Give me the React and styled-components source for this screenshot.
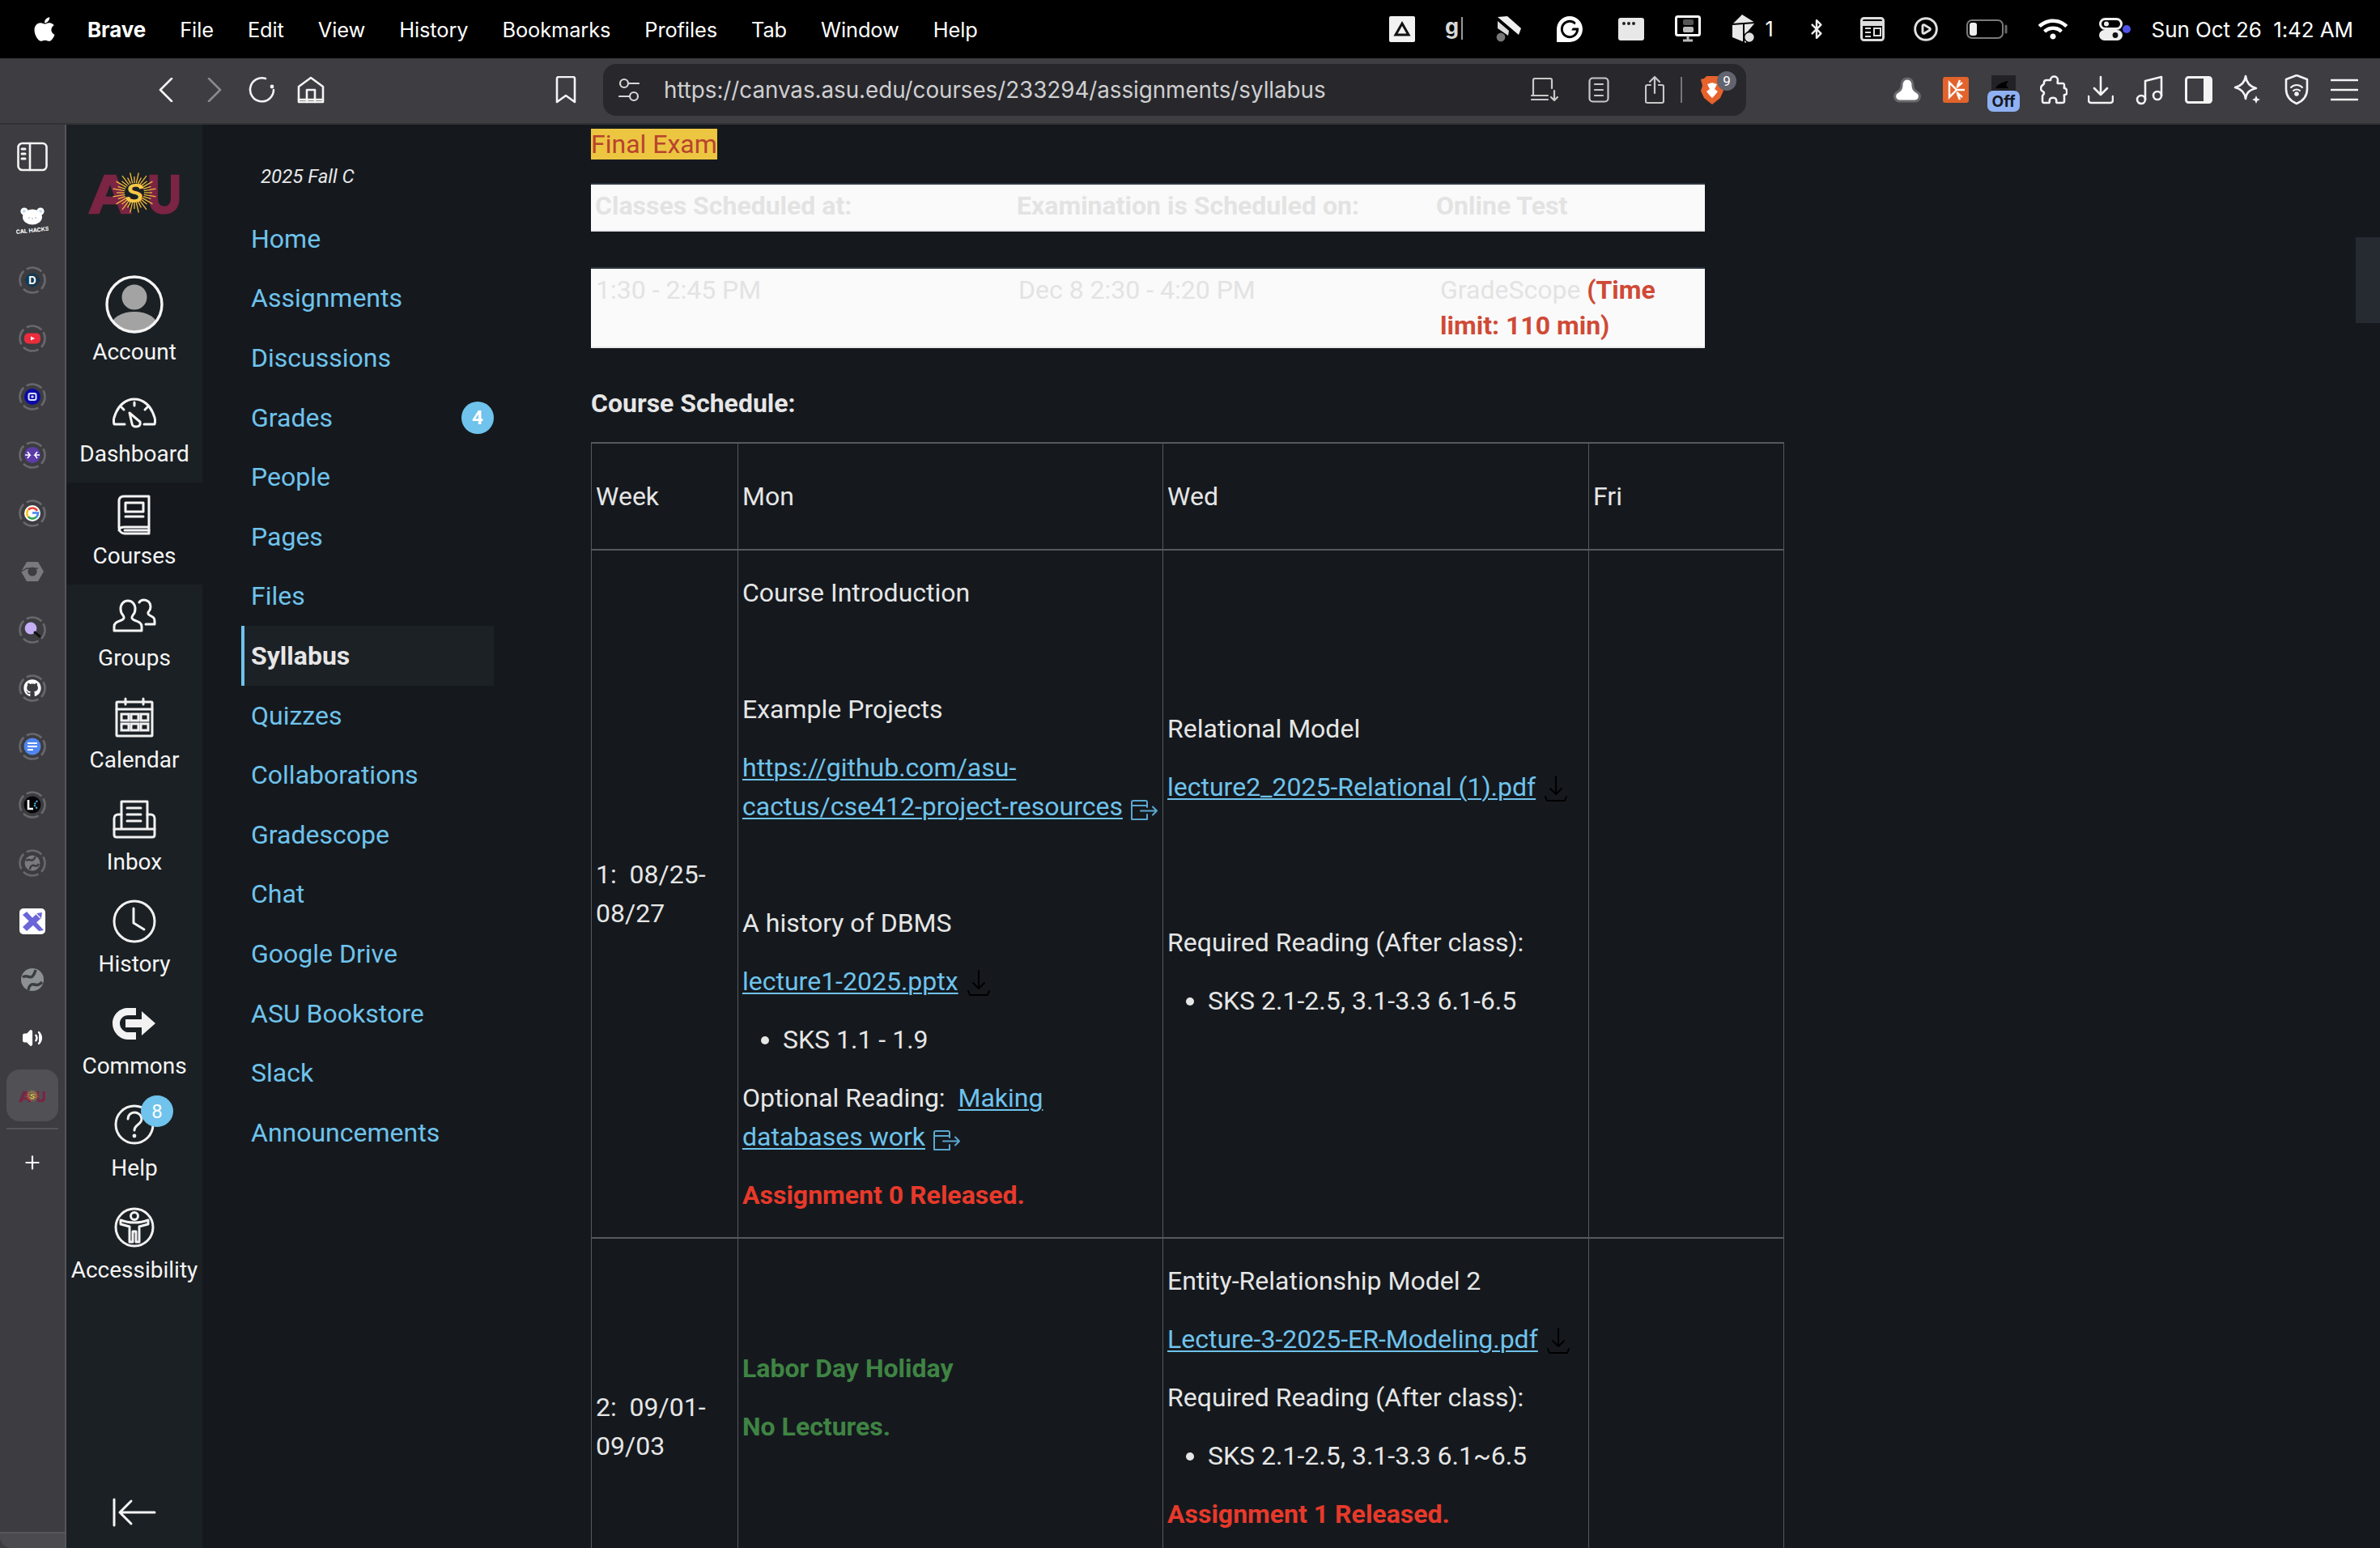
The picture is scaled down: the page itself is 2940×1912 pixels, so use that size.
import React from "react"
import styled, { createGlobalStyle } from "styled-components"
import { FaApple, FaGithub, FaWifi } from "react-icons/fa"
import { SiGrammarly } from "react-icons/si"
import { Bluetooth, CirclePlay, Plus, Volume2 } from "lucide-react"

const GlobalStyle = createGlobalStyle`
  html, body {
    margin: 0;
    padding: 0;
    background: #15191e;
    overflow: hidden;
  }
  * { box-sizing: border-box; }
`

const Screen = styled.div`
  width: 2940px;
  height: 1912px;
  display: flex;
  flex-direction: column;
  overflow: hidden;
  position: relative;
  font-family: Roboto, "Liberation Sans", sans-serif;
  color: #e6e6e6;
`

/* mac menu bar */
const MenuBar = styled.div`
  height: 72px;
  flex: none;
  background: #000;
  display: flex;
  align-items: center;
  padding: 0 33px 0 38px;
  font-family: Inter, "Liberation Sans", sans-serif;
  font-size: 25px;
  color: #fff;
`
const MenuItems = styled.div`
  display: flex;
  align-items: center;
  gap: 42px;
  margin-left: 36px;
`
const MenuItem = styled.span`
  font-weight: ${p => (p.$bold ? 700 : 400)};
  font-size: ${p => (p.$bold ? 26 : 25.4)}px;
  letter-spacing: -0.1px;
`
const StatusArea = styled.div`
  margin-left: auto;
  display: flex;
  align-items: center;
  height: 100%;
`
const StatusSlot = styled.span`
  display: flex;
  align-items: center;
  justify-content: center;
  width: ${p => p.$w}px;
  margin-left: ${p => p.$ml}px;
`
const ClockText = styled.span`
  margin-left: 25px;
  white-space: pre;
  font-size: 26px;
  letter-spacing: -0.1px;
`

/* browser toolbar */
const Toolbar = styled.div`
  height: 82px;
  flex: none;
  background: #3d3d42;
  border-bottom: 2px solid #323236;
  display: flex;
  align-items: center;
  padding-bottom: 2px;
`
const ToolSlot = styled.span`
  display: flex;
  align-items: center;
  justify-content: center;
  flex: none;
  width: ${p => p.$w}px;
  margin-left: ${p => p.$ml}px;
  position: relative;
`
const UrlBar = styled.div`
  margin-left: 33px;
  width: 1412px;
  height: 64px;
  flex: none;
  border-radius: 16px;
  background: #28282c;
  display: flex;
  align-items: center;
  padding-left: 19px;
`
const UrlText = styled.span`
  margin-left: 30px;
  font-family: Inter, "Liberation Sans", sans-serif;
  font-size: 27.8px;
  color: #cfcfd1;
  letter-spacing: -0.05px;
`
const UrlActions = styled.div`
  margin-left: auto;
  display: flex;
  align-items: center;
  padding-right: 27px;
`
const UrlDivider = styled.span`
  width: 2px;
  height: 32px;
  background: #77777b;
  margin-left: 20px;
`
const ShieldBadge = styled.span`
  position: absolute;
  top: -5px;
  right: -15px;
  width: 24px;
  height: 24px;
  border-radius: 50%;
  background: #62646f;
  color: #fff;
  font-size: 17px;
  display: flex;
  align-items: center;
  justify-content: center;
`
const OffTag = styled.span`
  position: absolute;
  left: 0;
  bottom: -9px;
  width: 40px;
  height: 26px;
  border-radius: 7px;
  background: #8fb0f3;
  color: #15181f;
  font-size: 19px;
  font-weight: 700;
  font-family: Inter, "Liberation Sans", sans-serif;
  display: flex;
  align-items: center;
  justify-content: center;
`

/* page body */
const Body = styled.div`
  flex: 1;
  display: flex;
  min-height: 0;
`
const TabStrip = styled.div`
  width: 82px;
  flex: none;
  background: #3c3c41;
  border-right: 2px solid #55555a;
  display: flex;
  flex-direction: column;
  align-items: center;
  padding-top: 18px;
  position: relative;
  &::after {
    content: "";
    position: absolute;
    left: 0;
    right: 0;
    bottom: 0;
    height: 18px;
    border-bottom-left-radius: 14px;
    border-top: 2px solid #55555a;
    background: #4a4a4f;
  }
`
const PanelToggle = styled.div`
  height: 44px;
  display: flex;
  align-items: center;
`
const BearTile = styled.div`
  margin-top: 38px;
  height: 40px;
  margin-bottom: 16px;
  display: flex;
  align-items: center;
`
const TabRow = styled.div`
  height: 72px;
  width: 100%;
  flex: none;
  display: flex;
  align-items: center;
  justify-content: center;
`
const ActiveTab = styled.div`
  width: 64px;
  height: 64px;
  margin-top: 3px;
  flex: none;
  border-radius: 16px;
  background: #505055;
  display: flex;
  align-items: center;
  justify-content: center;
`
const TabDivider = styled.div`
  width: 64px;
  height: 2px;
  flex: none;
  margin-top: 8px;
  background: #55555a;
`
const AddTab = styled.div`
  margin-top: 28px;
  display: flex;
`

const GlobalNav = styled.nav`
  width: 168px;
  flex: none;
  background: #1b2024;
  display: flex;
  flex-direction: column;
  align-items: stretch;
`
const LogoBlock = styled.div`
  height: 190px;
  flex: none;
  display: flex;
  justify-content: center;
  padding-top: 59px;
`
const GlobalItem = styled.div`
  height: 126px;
  flex: none;
  position: relative;
  display: flex;
  flex-direction: column;
  align-items: center;
  background: ${p => (p.$active ? "#15191e" : "transparent")};
`
const GlobalIcon = styled.div`
  height: 80px;
  flex: none;
  width: 100%;
  display: flex;
  align-items: center;
  justify-content: center;
  margin-top: ${p => p.$offset || 0}px;
`
const GlobalLabel = styled.span`
  position: absolute;
  top: 72px;
  line-height: 38px;
  font-size: 28px;
  color: #f5f5f5;
  white-space: nowrap;
`
const HelpBadge = styled.span`
  position: absolute;
  top: 1px;
  left: 92px;
  width: 40px;
  height: 39px;
  border-radius: 50%;
  background: #6fc3ec;
  color: #fff;
  font-size: 24px;
  display: flex;
  align-items: center;
  justify-content: center;
`
const CollapseRow = styled.div`
  margin-top: auto;
  height: 72px;
  flex: none;
  display: flex;
  justify-content: center;
  align-items: flex-start;
  padding-top: 10px;
`

const CourseNav = styled.nav`
  width: 480px;
  flex: none;
  padding: 46px 0 0 48px;
`
const TermLabel = styled.div`
  margin-left: 24px;
  height: 58px;
  line-height: 36px;
  font-size: 24px;
  font-style: italic;
  color: #e8e8e8;
`
const CourseLink = styled.div`
  width: 312px;
  height: 73.6px;
  display: flex;
  align-items: center;
  justify-content: space-between;
  padding-left: ${p => (p.$active ? 8 : 12)}px;
  font-size: 32px;
  font-weight: ${p => (p.$active ? 700 : 400)};
  color: ${p => (p.$active ? "#e6e6e6" : "#6fc3ec")};
  background: ${p => (p.$active ? "#1c2125" : "transparent")};
  border-left: ${p => (p.$active ? "4px solid #6fc3ec" : "none")};
`
const CountBadge = styled.span`
  width: 40px;
  height: 40px;
  border-radius: 50%;
  background: #6fc3ec;
  color: #fff;
  font-size: 24px;
  font-weight: 700;
  display: flex;
  align-items: center;
  justify-content: center;
`

/* syllabus */
const Main = styled.main`
  flex: 1;
  min-width: 0;
  height: 1758px;
  overflow: hidden;
  font-size: 32px;
  line-height: 48px;
  color: #e6e6e6;
`
const FinalExam = styled.div`
  height: 72px;
`
const Highlight = styled.span`
  background: #ecc641;
  color: #b8432f;
`
const ExamBox = styled.div`
  width: 1376px;
  margin-bottom: 44px;
  height: ${p => p.$h}px;
  background: #fafafa;
  border-top: 2px solid #2d3640;
  border-bottom: 2px solid #e9e9eb;
  display: grid;
  grid-template-columns: ${p => p.$cols};
  padding: ${p => p.$pad}px 0 0 ${p => p.$left}px;
  line-height: 44px;
  color: #e3e3e3;
  font-weight: ${p => (p.$bold ? 700 : 400)};
`
const TimeLimit = styled.strong`
  color: #cf4a36;
`
const SectionTitle = styled.div`
  font-weight: 700;
  margin-bottom: 24px;
`
const Schedule = styled.table`
  width: 1473px;
  border-collapse: collapse;
  table-layout: fixed;
  td {
    border: 2px solid #56595c;
    border-left-width: 1px;
    border-right-width: 1px;
    padding: 4px 5px;
    vertical-align: middle;
  }
  p {
    margin: 24px 0;
  }
  ul {
    margin: 24px 0;
    padding-left: 50px;
  }
`
const HeadRow = styled.tr`
  height: 132px;
`
const DocLink = styled.a`
  color: #6fc3ec;
  text-decoration: underline;
  text-decoration-thickness: 2px;
  text-underline-offset: 3px;
`
const Released = styled.strong`
  color: #e8392a;
`
const Holiday = styled.strong`
  color: #3f8443;
`
const ScrollThumb = styled.div`
  position: absolute;
  right: 0;
  top: 293px;
  width: 30px;
  height: 106px;
  background: #262a31;
`
const InlineIcon = styled.svg`
  margin-left: ${p => p.$ml || 10}px;
  vertical-align: -7px;
`

const stroke = { fill: "none", stroke: "currentColor", strokeLinecap: "round", strokeLinejoin: "round" }

const ExternalIcon = () => (
  <InlineIcon width="34" height="26" viewBox="0 0 34 26" style={{ color: "#5aa8cf" }}>
    <path {...stroke} strokeWidth="2" d="M20 9V3a2 2 0 0 0-2-2H3a2 2 0 0 0-2 2v21h19v-6M1 7h19M12 13.5h20M27 8.5l5 5-5 5" />
  </InlineIcon>
)

const DownloadIcon = () => (
  <InlineIcon width="30" height="32" viewBox="0 0 30 32" style={{ color: "#000" }}>
    <path {...stroke} strokeWidth="2" d="M15 1v22M8 16l7 7 7-7M2 26l2 5h22l2-5" />
  </InlineIcon>
)

/* drawn logo, the letters stay real text */
const logoLetter = { fontFamily: "Liberation Sans", fontWeight: 700, stroke: "#7b2444", strokeWidth: 2.4, fill: "#7b2444" }

const AsuLogo = ({ width = 117, height = 51 }) => (
  <svg width={width} height={height} viewBox="0 0 117 51" overflow="visible">
    <text {...logoLetter} x="1" y="50" fontSize="66" textLength="54" lengthAdjust="spacingAndGlyphs">A</text>
    <text {...logoLetter} x="74" y="50" fontSize="66" textLength="42" lengthAdjust="spacingAndGlyphs">U</text>
    <g stroke="#f2b93b" strokeWidth="1.3">
      {Array.from({ length: 32 }).map((_, i) => {
        const a = (i / 32) * Math.PI * 2
        const len = i % 2 ? 27 : 22
        return <line key={i} x1={58 + Math.cos(a) * 12} y1={25 + Math.sin(a) * 12} x2={58 + Math.cos(a) * len} y2={25 + Math.sin(a) * (len - 2)} />
      })}
    </g>
    <text x="58" y="37" textAnchor="middle" fontFamily="Liberation Sans" fontWeight="700" fontStyle="italic" fontSize="34" fill="#f7c748">S</text>
  </svg>
)

const Ring = ({ children }) => (
  <svg width="34" height="34" viewBox="0 0 34 34">
    <circle cx="17" cy="17" r="15.5" fill="none" stroke="#68686c" strokeWidth="2.6" strokeDasharray="20 4.4" transform="rotate(-30 17 17)" />
    {children}
  </svg>
)

const tabIcons = [
  <Ring key="d">
    <path d="M7 17l10-9 10 9-10 9z" fill="#143a52" /><circle cx="17" cy="17" r="8.5" fill="#143a52" />
    <text x="17" y="21.5" textAnchor="middle" fontSize="13" fontWeight="700" fontFamily="Inter" fill="#fff">D</text>
  </Ring>,
  <Ring key="yt">
    <rect x="7" y="10.5" width="20" height="13" rx="5" fill="#ec2c3c" /><path d="M15 14.5l5 2.5-5 2.5z" fill="#fff" />
  </Ring>,
  <Ring key="box">
    <circle cx="17" cy="17" r="10" fill="#0a0aa8" /><rect x="12.5" y="13" width="9" height="8" rx="2" fill="none" stroke="#dfe3ff" strokeWidth="2" /><rect x="15.5" y="15.6" width="3" height="2.8" fill="#dfe3ff" />
  </Ring>,
  <Ring key="purple">
    <circle cx="17" cy="17" r="10" fill="#5b3ca8" /><path d="M8 17h6l-3-4M14 17l-3 4M26 17h-6l3-4M20 17l3 4" stroke="#fff" strokeWidth="1.6" fill="none" />
  </Ring>,
  <Ring key="g">
    <circle cx="17" cy="17" r="10" fill="#fff" />
    <path d="M23 14a7 7 0 0 0-11-1.5" fill="none" stroke="#ea4335" strokeWidth="2.6" />
    <path d="M12 12.5a7 7 0 0 0 0 9" fill="none" stroke="#fbbc05" strokeWidth="2.6" />
    <path d="M12 21.5a7 7 0 0 0 10 0" fill="none" stroke="#34a853" strokeWidth="2.6" />
    <path d="M22 21.5c1.4-1.4 2-3 2-5h-7" fill="none" stroke="#4285f4" strokeWidth="2.6" />
  </Ring>,
  <svg key="hex" width="30" height="26" viewBox="0 0 30 26"><path d="M8 1h14l7 12-7 12H8L1 13z" fill="#7a7a7e" /><circle cx="15" cy="13" r="5.6" fill="#3c3c41" /><path d="M1 13l7-4h14" stroke="#3c3c41" strokeWidth="1.4" fill="none" /></svg>,
  <Ring key="lens">
    <circle cx="15" cy="15" r="7.4" fill="#c4aef5" /><path d="M20 20l6 5" stroke="#111" strokeWidth="3" strokeLinecap="round" />
  </Ring>,
  <Ring key="gh">
    <foreignObject x="6" y="6" width="22" height="22"><FaGithub size={22} color="#fff" /></foreignObject>
  </Ring>,
  <Ring key="docs">
    <circle cx="17" cy="17" r="10.5" fill="#4f86f0" /><path d="M11 13h12M11 17h12M11 21h7" stroke="#fff" strokeWidth="2" />
  </Ring>,
  <Ring key="lk">
    <circle cx="17" cy="17" r="10.5" fill="#060606" /><path d="M12 11v11h6" stroke="#fff" strokeWidth="2.6" fill="none" /><path d="M23 12l-4 5 4 5" stroke="#58c6f0" strokeWidth="2" fill="none" strokeDasharray="2 1.4" />
  </Ring>,
  <Ring key="globe1">
    <circle cx="17" cy="17" r="9.5" fill="#7b7b7f" /><path d="M9 14c4-3 7 1 9-1s2-3 3-4M14 25c0-3 2-6 5-5s4 1 6-2" stroke="#3c3c41" strokeWidth="2.4" fill="none" />
  </Ring>,
  <svg key="tools" width="32" height="32" viewBox="0 0 32 32">
    <rect width="32" height="32" rx="5" fill="#fff" />
    <path d="M4 8l5-4 21 23-6 1z" fill="#6a66d8" /><path d="M28 5l-1 7L9 28l-5-5L22 6z" fill="#6a66d8" />
    <path d="M21 7l5 5" stroke="#fff" strokeWidth="1.2" />
  </svg>,
  <svg key="globe2" width="28" height="28" viewBox="0 0 28 28">
    <circle cx="14" cy="14" r="14" fill="#8d9094" /><path d="M2 11c5-4 9 2 12-1s3-5 4-8M9 27c0-4 3-8 7-7s6 1 10-3" stroke="#3c3c41" strokeWidth="3.4" fill="none" />
  </svg>,
  <Volume2 key="vol" size={26} color="#fff" fill="#fff" strokeWidth={2.2} />,
]

const Bear = () => (
  <svg width="40" height="38" viewBox="0 0 40 38">
    <circle cx="10" cy="6" r="4.6" fill="#fff" /><circle cx="30" cy="6" r="4.6" fill="#fff" />
    <circle cx="10" cy="6" r="2" fill="#bcdcf2" /><circle cx="30" cy="6" r="2" fill="#bcdcf2" />
    <ellipse cx="20" cy="13" rx="12" ry="9.5" fill="#fff" />
    <circle cx="16" cy="14" r="1" fill="#9fc8ea" /><circle cx="24" cy="14" r="1" fill="#9fc8ea" /><circle cx="20" cy="15" r="1" fill="#f0b8c4" />
    <text x="20" y="32" textAnchor="middle" fontSize="7" fontWeight="700" fontFamily="Inter" fill="#fff" transform="rotate(-6 20 30)">CAL HACKS</text>
  </svg>
)

const line = { ...stroke, strokeWidth: 3 }

const icons = {
  account: (
    <svg width="72" height="72" viewBox="0 0 72 72">
      <defs><clipPath id="av"><circle cx="36" cy="36" r="33" /></clipPath></defs>
      <g clipPath="url(#av)" fill="#a3a3a3"><circle cx="36" cy="27" r="15.5" /><ellipse cx="36" cy="63" rx="29" ry="18" /></g>
      <circle cx="36" cy="36" r="34" fill="none" stroke="#f5f5f5" strokeWidth="3.4" />
    </svg>
  ),
  dashboard: (
    <svg width="54" height="38" viewBox="0 0 54 38" color="#f5f5f5">
      <path {...line} d="M15 33H2c-1-4-1-7 1-11C7 10 16 2 27 2s20 8 24 20c2 4 2 7 1 11H39" />
      <path {...line} d="M27 6v4M11 12l3 3M43 12l-3 3" />
      <path {...line} d="M21 19l13 11c1 4-1 6-5 6-3 0-5-2-5-4z" />
    </svg>
  ),
  courses: (
    <svg width="42" height="50" viewBox="0 0 42 50" color="#f5f5f5">
      <path {...line} d="M39 2H8C4 2 2 4 2 8v33c0 4 3 7 7 7h30v-8M39 2v38H9c-4 0-7 1-7 4" />
      <rect {...line} x="10" y="10" width="22" height="11" />
      <path {...line} d="M10 27h22M9 44h30" />
    </svg>
  ),
  groups: (
    <svg width="54" height="42" viewBox="0 0 54 42" color="#f5f5f5">
      <path {...line} d="M2 40v-5c0-5 4-6 9-8 3-1 4-3 2-6-2-2-3-5-3-8 0-6 4-10 9-10s9 4 9 10c0 3-1 6-3 8-2 3-1 5 2 6 5 2 9 3 9 8v5z" />
      <path {...line} d="M33 5c1-2 4-3 6-3 4 0 8 3 8 8 0 2-1 5-2 6-2 2-1 4 1 5 4 2 6 3 6 7v4H41" />
    </svg>
  ),
  calendar: (
    <svg width="48" height="50" viewBox="0 0 48 50" color="#f1f1f1">
      <rect {...line} x="2" y="6" width="44" height="42" rx="1" />
      <path {...line} d="M2 15h44M13 2v7M35 2v7" />
      {[0, 1, 2].flatMap(c => [0, 1].map(r => (
        <rect key={`${c}${r}`} x={8 + c * 12} y={21 + r * 12} width="9" height="8" fill="none" stroke="currentColor" strokeWidth="3" />
      )))}
    </svg>
  ),
  inbox: (
    <svg width="54" height="48" viewBox="0 0 54 48" color="#f1f1f1">
      <path {...line} d="M11 18H7c-3 0-5 2-5 5v20c0 2 1 3 3 3h44c2 0 3-1 3-3V23c0-3-2-5-5-5h-4" />
      <path {...line} d="M11 36V2h32v34M2 36h50" />
      <path {...line} d="M18 10h17M18 18h17M18 26h17" />
    </svg>
  ),
  history: (
    <svg width="54" height="54" viewBox="0 0 54 54" color="#f1f1f1">
      <circle {...line} cx="27" cy="27" r="25" />
      <path {...line} d="M26 11v18l13 8" />
    </svg>
  ),
  commons: (
    <svg width="54" height="40" viewBox="0 0 54 40">
      <path d="M29 1H19C9 1 0 9 0 20s9 20 19 20h10v-9H19c-5 0-10-5-10-11S14 10 19 10h10z" fill="#f2f2f2" />
      <path d="M16 15h20V5l17 15-17 15V25H16z" fill="#f2f2f2" />
    </svg>
  ),
  help: (
    <svg width="50" height="50" viewBox="0 0 50 50" color="#f1f1f1">
      <circle {...line} cx="25" cy="25" r="23" />
      <path {...line} d="M17 18c0-5 4-8 8-8s9 3 9 8c0 7-9 7-9 14" />
      <circle cx="25" cy="39" r="2.4" fill="currentColor" />
    </svg>
  ),
  accessibility: (
    <svg width="50" height="50" viewBox="0 0 50 50" color="#f1f1f1">
      <circle {...line} cx="25" cy="25" r="23" />
      <circle {...line} cx="25" cy="11" r="4.5" />
      <path {...line} d="M8 16c5 2 11 3 17 3s12-1 17-3v5l-11 3v19h-4V30h-4v13h-4V24L8 21z" />
    </svg>
  ),
}

const globalItems = [
  { label: "Account", icon: icons.account, offset: -8 },
  { label: "Dashboard", icon: icons.dashboard },
  { label: "Courses", icon: icons.courses, active: true },
  { label: "Groups", icon: icons.groups, offset: -2 },
  { label: "Calendar", icon: icons.calendar, offset: -2 },
  { label: "Inbox", icon: icons.inbox, offset: -2 },
  { label: "History", icon: icons.history, offset: -2 },
  { label: "Commons", icon: icons.commons, offset: -2 },
  { label: "Help", icon: icons.help, badge: "8", offset: -3 },
  { label: "Accessibility", icon: icons.accessibility, offset: -2 },
]

const courseLinks = [
  "Home", "Assignments", "Discussions", "Grades", "People", "Pages", "Files", "Syllabus",
  "Quizzes", "Collaborations", "Gradescope", "Chat", "Google Drive", "ASU Bookstore", "Slack", "Announcements",
]

const tool = { ...stroke, strokeWidth: 2.6, color: "#f4f4f4" }

const StatusIcons = () => (
  <>
    <StatusSlot $w={32} $ml={0}>
      <svg width="32" height="32" viewBox="0 0 32 32"><rect width="32" height="32" rx="2" fill="#f2f2f2" /><path d="M16 9l8 14H8z" fill="none" stroke="#111" strokeWidth="3" /></svg>
    </StatusSlot>
    <StatusSlot $w={24} $ml={37}>
      <svg width="24" height="34" viewBox="0 0 24 34" overflow="visible"><text x="0" y="23" fontFamily="Inter" fontSize="27" fontWeight="700" fill="#d8d8d8">g</text><path d="M21 2v28" stroke="#999" strokeWidth="2" /></svg>
    </StatusSlot>
    <StatusSlot $w={32} $ml={39}>
      <svg width="32" height="34" viewBox="0 0 32 34"><path d="M2 2l12-1 17 15-3 8z" fill="#f0f0f0" /><path d="M2 7l14 12-1 6L2 16z" fill="#dcdcdc" /><circle cx="6" cy="27" r="5.4" fill="#777" /></svg>
    </StatusSlot>
    <StatusSlot $w={32} $ml={43}><SiGrammarly size={32} color="#fff" /></StatusSlot>
    <StatusSlot $w={32} $ml={44}>
      <svg width="32" height="28" viewBox="0 0 32 28"><rect width="32" height="28" rx="3" fill="#e8e8e8" /><circle cx="7" cy="7" r="2" fill="#222" /><circle cx="13" cy="7" r="2" fill="#222" /><circle cx="19" cy="7" r="2" fill="#222" /></svg>
    </StatusSlot>
    <StatusSlot $w={32} $ml={38}>
      <svg width="32" height="34" viewBox="0 0 32 34"><rect x="1.5" y="1.5" width="29" height="23" rx="2" fill="#000" stroke="#fff" strokeWidth="3" /><rect x="10" y="5" width="13" height="7" rx="2" fill="#555" /><rect x="10" y="14" width="13" height="7" rx="2" fill="#bbb" /><path d="M16 25v5M10 31h12" stroke="#bbb" strokeWidth="3" /></svg>
    </StatusSlot>
    <StatusSlot $w={32} $ml={37}>
      <svg width="32" height="36" viewBox="0 0 32 36"><path d="M14 0l16 10-10 12-1 13L2 28V12z" fill="#e8e8e8" /><path d="M2 12l28-2" stroke="#000" strokeWidth="2" /><path d="M16 12v22" stroke="#000" strokeWidth="2" /><circle cx="23" cy="28" r="6.4" fill="#e0e0e0" stroke="#000" strokeWidth="1.5" /></svg>
    </StatusSlot>
    <StatusSlot $w={14} $ml={9}><span>1</span></StatusSlot>
    <StatusSlot $w={26} $ml={38}><Bluetooth size={36} color="#efefef" strokeWidth={2.2} /></StatusSlot>
    <StatusSlot $w={30} $ml={41}>
      <svg width="30" height="30" viewBox="0 0 30 30"><rect x="1.5" y="1.5" width="27" height="27" rx="3" fill="none" stroke="#ddd" strokeWidth="3" /><path d="M2 8h26" stroke="#ddd" strokeWidth="6" /><path d="M6 14h7M6 19h7M6 24h7" stroke="#ddd" strokeWidth="2" /><rect x="17" y="14" width="8" height="9" fill="none" stroke="#ddd" strokeWidth="2" /></svg>
    </StatusSlot>
    <StatusSlot $w={32} $ml={35}><CirclePlay size={32} color="#e0e0e0" strokeWidth={2.2} /></StatusSlot>
    <StatusSlot $w={52} $ml={34}>
      <svg width="52" height="24" viewBox="0 0 52 24"><rect x="1" y="1" width="44" height="22" rx="6" fill="none" stroke="#7a7a7a" strokeWidth="2" /><rect x="4" y="4" width="9" height="16" rx="3" fill="#eee" /><path d="M49 8v8" stroke="#666" strokeWidth="3" strokeLinecap="round" /></svg>
    </StatusSlot>
    <StatusSlot $w={36} $ml={37}><FaWifi size={36} color="#fff" /></StatusSlot>
    <StatusSlot $w={40} $ml={39}>
      <svg width="40" height="28" viewBox="0 0 40 28"><rect x="1.5" y="1.5" width="26" height="12" rx="6" fill="none" stroke="#eee" strokeWidth="3" /><circle cx="9" cy="7.5" r="3" fill="#eee" /><rect x="0" y="15" width="29" height="13" rx="6.5" fill="#eee" /><circle cx="20" cy="21.5" r="3.4" fill="#111" /><circle cx="34" cy="14" r="5" fill="#4f53e8" /></svg>
    </StatusSlot>
  </>
)

const ToolbarRow = () => (
  <Toolbar>
    <ToolSlot $w={20} $ml={195}>
      <svg width="20" height="30" viewBox="0 0 20 30" {...tool}><path d="M17 1L3 15l14 14" /></svg>
    </ToolSlot>
    <ToolSlot $w={20} $ml={40}>
      <svg width="20" height="30" viewBox="0 0 20 30" {...tool} color="#8a8a8d"><path d="M3 1l14 14L3 29" /></svg>
    </ToolSlot>
    <ToolSlot $w={34} $ml={32}>
      <svg width="34" height="34" viewBox="0 0 34 34" {...tool}><path d="M21 3A14.500 14.500 0 1 0 31 17" /><circle cx="29" cy="13" r="2.400" fill="#f4f4f4" stroke="none" /></svg>
    </ToolSlot>
    <ToolSlot $w={34} $ml={26}>
      <svg width="34" height="34" viewBox="0 0 34 34" {...tool}><path d="M2 32V13L17 2l15 11v19z" /><path d="M12 32V17h10v15M2 29h30" /></svg>
    </ToolSlot>
    <ToolSlot $w={26} $ml={285}>
      <svg width="26" height="34" viewBox="0 0 26 34" {...tool}><path d="M2 3c0-1 1-2 2-2h18c1 0 2 1 2 2v29l-11-8-11 8z" /></svg>
    </ToolSlot>
    <UrlBar>
      <svg width="26" height="30" viewBox="0 0 26 30" {...tool} color="#d6d6d6" strokeWidth="2.2"><circle cx="7" cy="7" r="5" /><path d="M13 7h12M1 23h12" /><circle cx="19" cy="23" r="5" /></svg>
      <UrlText>https://canvas.asu.edu/courses/233294/assignments/syllabus</UrlText>
      <UrlActions>
        <ToolSlot $w={34} $ml={0}>
          <svg width="34" height="30" viewBox="0 0 34 30" {...tool} color="#c8c8c8" strokeWidth="2.2"><path d="M3 22V3a2 2 0 0 1 2-2h19a2 2 0 0 1 2 2v10M1 27h20M1 22h20M29 16v12M25 24l4 4 4-4" /></svg>
        </ToolSlot>
        <ToolSlot $w={26} $ml={37}>
          <svg width="26" height="32" viewBox="0 0 26 32" {...tool} color="#c8c8c8" strokeWidth="2.2"><rect x="1.500" y="1.500" width="23" height="29" rx="4" /><path d="M8 9h10M8 16h10M8 23h10" /></svg>
        </ToolSlot>
        <ToolSlot $w={24} $ml={44}>
          <svg width="24" height="36" viewBox="0 0 24 36" {...tool} color="#c8c8c8" strokeWidth="2.2"><path d="M7 12H3a2 2 0 0 0-2 2v18a2 2 0 0 0 2 2h18a2 2 0 0 0 2-2V14a2 2 0 0 0-2-2h-4M12 22V2M6 8l6-6 6 6" /></svg>
        </ToolSlot>
        <UrlDivider />
        <ToolSlot $w={30} $ml={22}>
          <svg width="30" height="36" viewBox="0 0 30 36"><path d="M8 1h14l3 3 4 1-2 8 2 6-4 9-10 8-10-8-4-9 2-6-2-8 4-1z" fill="#e8622c" /><path d="M15 9l6 2-3 6 4 3-4 5-3 3-3-3-4-5 4-3-3-6z" fill="#fff" /></svg>
          <ShieldBadge>9</ShieldBadge>
        </ToolSlot>
      </UrlActions>
    </UrlBar>
    <ToolSlot $w={34} $ml={182}>
      <svg width="34" height="32" viewBox="0 0 34 32"><path d="M17 2c-5 0-7 4-7 9 0 3-1 5-4 7-4 2-5 5-4 8s3 4 6 4h18c3 0 5-1 6-4s0-6-4-8c-3-2-4-4-4-7 0-5-2-9-7-9z" fill="#fff" stroke="#6a6a6e" strokeWidth="3" /></svg>
    </ToolSlot>
    <ToolSlot $w={32} $ml={27}>
      <svg width="32" height="32" viewBox="0 0 32 32"><rect width="32" height="32" rx="3" fill="#e2632b" /><path d="M8 7v18l9-9zM16 16h11M17 13l7-6M17 19l7 6M21 4l-3 7M21 28l-3-7" fill="none" stroke="#fff" strokeWidth="2.400" /></svg>
    </ToolSlot>
    <ToolSlot $w={40} $ml={23}>
      <svg width="40" height="36" viewBox="0 0 40 36"><rect x="5" y="0" width="30" height="20" fill="#222226" /><path d="M10 16c2-5 9-8 16-9l-3 5 3 4z" fill="#000" /></svg>
      <OffTag>Off</OffTag>
    </ToolSlot>
    <ToolSlot $w={34} $ml={25}>
      <svg width="34" height="36" viewBox="0 0 34 36" {...tool}><path d="M13 6c0-6 9-6 9 0 0 2-1 3 0 4h6c2 0 2 1 2 3 0 3-1 3 1 3 3 1 3 8 0 8-2 0-1 1-1 3v5c0 2-1 2-3 2h-6c-2-1 0-2-1-4-1-3-7-3-8 0-1 2 1 3-1 4H5c-2 0-2-1-2-3v-5c0-2 2-2 2-4 0-3-4-1-4-6 0-4 4-4 4-6v-1c0-2 1-3 3-3h4c1 0 1-1 1-0z" /></svg>
    </ToolSlot>
    <ToolSlot $w={32} $ml={25}>
      <svg width="32" height="36" viewBox="0 0 32 36" {...tool}><path d="M16 2v22M8 16l8 8 8-8M1 26v5a3 3 0 0 0 3 3h24a3 3 0 0 0 3-3v-5" /></svg>
    </ToolSlot>
    <ToolSlot $w={34} $ml={27}>
      <svg width="34" height="38" viewBox="0 0 34 38" {...tool}><circle cx="7" cy="31" r="5" /><circle cx="27" cy="26" r="5" /><path d="M12 31V8L32 3v23" /></svg>
    </ToolSlot>
    <ToolSlot $w={34} $ml={27}>
      <svg width="34" height="34" viewBox="0 0 34 34"><rect x="1.500" y="1.500" width="31" height="31" rx="3" fill="#3d3d42" stroke="#f4f4f4" strokeWidth="3" /><rect x="23" y="1.500" width="10" height="31" rx="2" fill="#f4f4f4" /></svg>
    </ToolSlot>
    <ToolSlot $w={34} $ml={26}>
      <svg width="34" height="38" viewBox="0 0 34 38" {...tool}><path d="M15 2c1 8 5 13 13 15-8 2-12 5-13 13-1-8-5-12-13-14 8-2 12-6 13-14z" /><path d="M28 26l1.500 3.500L33 31l-3.500 1.500L28 36l-1.500-3.500L23 31l3.500-1.500z" fill="#f4f4f4" stroke="none" /></svg>
    </ToolSlot>
    <ToolSlot $w={30} $ml={29}>
      <svg width="30" height="38" viewBox="0 0 30 38" {...tool}><path d="M15 1l13 5v12c0 9-6 15-13 18C8 33 2 27 2 18V6z" /><path d="M8 16c4-4 10-4 14 0M11 20c2-2 6-2 8 0" strokeWidth="2" /><circle cx="15" cy="24" r="1.500" fill="#f4f4f4" /></svg>
    </ToolSlot>
    <ToolSlot $w={34} $ml={27}>
      <svg width="34" height="30" viewBox="0 0 34 30" {...tool}><path d="M1 3h32M1 15h32M1 27h32" /></svg>
    </ToolSlot>
  </Toolbar>
)

const App = () => (
  <Screen>
    <GlobalStyle />
    <MenuBar>
      <FaApple size={34} />
      <MenuItems>
        <MenuItem $bold>Brave</MenuItem>
        {["File", "Edit", "View", "History", "Bookmarks", "Profiles", "Tab", "Window", "Help"].map(m => (
          <MenuItem key={m}>{m}</MenuItem>
        ))}
      </MenuItems>
      <StatusArea>
        <StatusIcons />
        <ClockText>Sun Oct 26  1:42 AM</ClockText>
      </StatusArea>
    </MenuBar>
    <ToolbarRow />
    <Body>
      <TabStrip>
        <PanelToggle>
          <svg width="38" height="38" viewBox="0 0 38 38" {...tool}><rect x="1.500" y="2" width="35" height="33" rx="5" /><path d="M16 2v33" /><path d="M6 9h4M6 15h4M6 21h4" strokeWidth="3" /></svg>
        </PanelToggle>
        <BearTile><Bear /></BearTile>
        {tabIcons.map((ic, i) => <TabRow key={i}>{ic}</TabRow>)}
        <ActiveTab><AsuLogo width={34} height={15} /></ActiveTab>
        <TabDivider />
        <AddTab><Plus size={26} color="#fff" strokeWidth={2} /></AddTab>
      </TabStrip>

      <GlobalNav>
        <LogoBlock><AsuLogo /></LogoBlock>
        {globalItems.map(it => (
          <GlobalItem key={it.label} $active={it.active}>
            <GlobalIcon $offset={it.offset}>{it.icon}</GlobalIcon>
            {it.badge && <HelpBadge>{it.badge}</HelpBadge>}
            <GlobalLabel>{it.label}</GlobalLabel>
          </GlobalItem>
        ))}
        <CollapseRow>
          <svg width="54" height="36" viewBox="0 0 54 36" {...tool} strokeWidth="3"><path d="M2 2v32M52 18H9M23 4L9 18l14 14" /></svg>
        </CollapseRow>
      </GlobalNav>

      <CourseNav>
        <TermLabel>2025 Fall C</TermLabel>
        {courseLinks.map(l => (
          <CourseLink key={l} $active={l === "Syllabus"}>
            {l}
            {l === "Grades" && <CountBadge>4</CountBadge>}
          </CourseLink>
        ))}
      </CourseNav>

      <Main>
        <FinalExam><Highlight>Final Exam</Highlight></FinalExam>
        <ExamBox $h={60} $pad={4} $left={5} $cols="521px 518px 1fr" $bold>
          <span>Classes Scheduled at:</span>
          <span>Examination is Scheduled on:</span>
          <span>Online Test</span>
        </ExamBox>
        <ExamBox $h={100} $pad={4} $left={6} $cols="522px 521px 1fr">
          <span>1:30 - 2:45 PM</span>
          <span>Dec 8 2:30 - 4:20 PM</span>
          <span>GradeScope <TimeLimit>(Time limit: 110 min)</TimeLimit></span>
        </ExamBox>
        <SectionTitle>Course Schedule:</SectionTitle>
        <Schedule>
          <colgroup>
            <col width="181" />
            <col width="525" />
            <col width="526" />
            <col width="241" />
          </colgroup>
          <tbody>
            <HeadRow>
              <td>Week</td>
              <td>Mon</td>
              <td>Wed</td>
              <td>Fri</td>
            </HeadRow>
            <tr>
              <td>1:&nbsp; 08/25-08/27</td>
              <td>
                <p>Course Introduction</p>
                <p>&nbsp;</p>
                <p>Example Projects</p>
                <p>
                  <DocLink>https://github.com/asu-<br />cactus/cse412-project-resources</DocLink>
                  <ExternalIcon />
                </p>
                <p>&nbsp;</p>
                <p>A history of DBMS</p>
                <p><DocLink>lecture1-2025.pptx</DocLink><DownloadIcon /></p>
                <ul><li>SKS 1.1 - 1.9</li></ul>
                <p>Optional Reading:&nbsp; <DocLink>Making databases work</DocLink><ExternalIcon /></p>
                <p><Released>Assignment 0 Released.</Released></p>
              </td>
              <td>
                <p>Relational Model</p>
                <p><DocLink>lecture2_2025-Relational (1).pdf</DocLink><DownloadIcon /></p>
                <p>&nbsp;<br />&nbsp;</p>
                <p>Required Reading (After class):</p>
                <ul><li>SKS 2.1-2.5, 3.1-3.3 6.1-6.5</li></ul>
                <p>&nbsp;</p>
              </td>
              <td></td>
            </tr>
            <tr>
              <td>2:&nbsp; 09/01-09/03</td>
              <td>
                <p><Holiday>Labor Day Holiday</Holiday></p>
                <p><Holiday>No Lectures.</Holiday></p>
                <p>&nbsp;</p>
              </td>
              <td>
                <p>Entity-Relationship Model 2</p>
                <p><DocLink>Lecture-3-2025-ER-Modeling.pdf</DocLink><DownloadIcon /></p>
                <p>Required Reading (After class):</p>
                <ul><li>SKS 2.1-2.5, 3.1-3.3 6.1~6.5</li></ul>
                <p><Released>Assignment 1 Released.</Released></p>
                <p>&nbsp;</p>
              </td>
              <td></td>
            </tr>
          </tbody>
        </Schedule>
      </Main>
    </Body>
    <ScrollThumb />
  </Screen>
)

export default App
